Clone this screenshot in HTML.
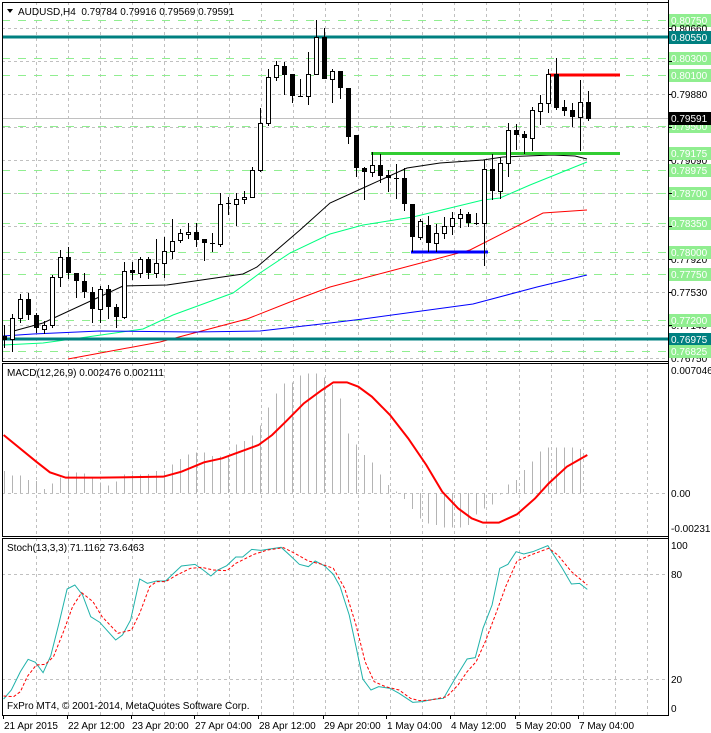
<!DOCTYPE html><html><head><meta charset="utf-8"><style>
html,body{margin:0;padding:0;background:#fff;width:711px;height:733px;overflow:hidden}
svg{display:block;font-family:"Liberation Sans",sans-serif;font-size:10px}
</style></head><body>
<svg id="s" width="711" height="733" xmlns="http://www.w3.org/2000/svg"></svg>
<script>
var S=document.getElementById('s'),h='';
function L(x1,y1,x2,y2,c,w,d){h+='<line x1="'+x1+'" y1="'+y1+'" x2="'+x2+'" y2="'+y2+'" stroke="'+c+'" stroke-width="'+(w||1)+'"'+(d?' stroke-dasharray="'+d+'"':'')+' shape-rendering="crispEdges"/>';}
function P(pts,c,w,d){h+='<polyline fill="none" points="'+pts.map(function(p){return p[0]+','+p[1]}).join(' ')+'" stroke="'+c+'" stroke-width="'+(w||1)+'"'+(d?' stroke-dasharray="'+d+'"':'')+'/>';}
function T(x,y,t,c,a){h+='<text x="'+x+'" y="'+y+'" fill="'+(c||'#000')+'"'+(a?' text-anchor="'+a+'"':'')+'>'+t+'</text>';}
function R(x,y,w,hh,f,s){h+='<rect x="'+x+'" y="'+y+'" width="'+w+'" height="'+hh+'" fill="'+f+'"'+(s?' stroke="'+s+'"':'')+' shape-rendering="crispEdges"/>';}
var vx=[];for(var i=0;i<20;i++)vx.push(Math.round(35.5+i*32.2));
var panes=[[2,361],[363,536],[538,715]];
// grids
panes.forEach(function(p){vx.forEach(function(x){L(x+.5,p[0],x+.5,p[1],'#c0c0c0',1,'3,3')})});
[28,61,94,127,160,193,226,259,292,325,358].forEach(function(y){L(2,y+.5,668,y+.5,'#c0c0c0',1,'3,3')});
L(2,493.5,668,493.5,'#c0c0c0',1,'3,3');
L(2,574.5,668,574.5,'#c0c0c0',1,'3,3');L(2,679.5,668,679.5,'#c0c0c0',1,'3,3');
// green dashed levels
[20,58,75,126,170,193,223,252,274,320,351].forEach(function(y){L(2,y+.5,668,y+.5,'#90ee90',1,'8,8')});
// bid line
L(2,118.5,668,118.5,'#c0c0c0',1);
// MAs
P([[3,345],[43,343],[87,337],[143,329],[173,315],[233,293],[260,273],[290,253],[330,234],[363,225],[413,217],[483,200],[500,198],[530,185],[587,162]],'#00ff7f',1);
P([[68,359],[160,342],[247,319],[290,302],[330,287],[383,273],[470,250],[543,213],[587,210]],'#ff0000',1);
P([[3,336],[33,334],[100,331],[193,332],[260,331],[330,323],[363,319],[473,304],[537,287],[587,275]],'#0000ff',1);
P([[10,332],[43,323],[123,286],[167,285],[243,274],[257,267],[300,230],[330,203],[363,188],[407,168],[440,163],[483,160],[503,157],[552,155],[575,156],[587,159]],'#000',1);
// thick lines
L(2,37,668,37,'#008080',3);L(2,339,668,339,'#008080',3);
L(549,75,620,75,'#ff0000',3);L(371,153.5,620,153.5,'#32cd32',3);L(411,252,488,252,'#0000ff',3);
// candles [open?, bodyTop, bodyBot, high, low, dark(1)/white(0)]
var C=[[336,340,325,348,1],[318,339,314,352,0],[299,318,294,323,0],[299,315,293,320,1],[315,328,313,333,1],[325,329,321,334,0],[277,325,275,328,0],[257,277,250,287,0],[257,273,247,279,1],[273,281,273,298,1],[281,292,273,298,1],[292,309,287,323,1],[289,309,286,323,0],[289,307,285,319,1],[307,317,304,328,1],[271,317,262,319,0],[270,273,262,280,1],[259,273,257,278,0],[259,273,257,279,1],[263,273,239,278,0],[251,263,237,278,0],[241,251,219,259,0],[233,240,229,243,0],[232,234,223,239,0],[232,240,223,247,1],[239,243,239,261,1],[243,243,233,252,2],[204,244,193,247,0],[203,203,197,215,2],[199,204,193,226,0],[197,199,191,204,0],[170,197,167,197,0],[123,170,108,172,0],[77,123,69,126,0],[65,77,61,81,0],[66,75,62,95,1],[74,96,74,103,1],[96,96,79,97,2],[74,96,52,105,0],[37,74,20,75,0],[37,79,28,79,1],[71,79,69,103,0],[71,88,71,99,1],[88,137,88,144,1],[135,168,135,177,1],[168,172,167,200,1],[165,172,152,177,0],[165,176,154,183,1],[175,178,170,192,1],[178,178,164,199,2],[178,204,168,211,1],[204,237,204,252,1],[221,237,219,240,0],[225,243,216,252,1],[233,243,224,252,0],[226,233,217,239,0],[218,226,212,235,0],[214,218,209,228,0],[214,223,212,227,1],[223,223,213,225,2],[169,223,160,266,0],[169,191,154,200,1],[163,191,158,199,0],[130,163,123,177,0],[130,135,124,150,1],[134,138,131,154,1],[110,138,107,151,0],[103,111,95,125,0],[74,103,69,113,0],[74,108,58,110,1],[107,111,100,116,1],[110,117,103,127,1],[102,117,80,151,0],[102,119,91,121,1]];
C.forEach(function(c,i){var x=4+8*i;L(x+.5,c[2],x+.5,c[3],'#000',1);
 if(c[4]==2){L(x-2,c[0]+.5,x+3,c[0]+.5,'#000',1)}
 else if(c[4]==1){R(x-2,c[0],5,Math.max(c[1]-c[0],2),'#000')}
 else{R(x-1.5,c[0]+.5,4,Math.max(c[1]-c[0],1),'#fff','#000')}});
// MACD histogram
var HB=[348,362,362,375,378,402,385,368,352,352,355,368,382,392,380,358,358,358,357,348,348,328,312,298,292,292,303,305,300,268,258,242,212,157,115,85,82,62,55,55,68,90,130,235,268,300,322,358,390,410,432,462,490,505,510,518,518,518,510,478,460,448,418,388,375,345,320,290,278,278,278,278,282];
HB.forEach(function(Y,i){var x=4+8*i;var y=355+Y/3;L(x+.5,493,x+.5,y,'#b4b4b4',1)});
var sg=[[8,240],[80,320],[110,352],[145,368],[220,368],[360,365],[400,350],[450,322],[490,310],[520,295],[570,270],[600,240],[630,200],[670,145],[710,105],[735,82],[765,82],[790,95],[820,125],[860,180],[900,250],[940,330],[975,410],[1010,460],[1040,490],[1065,503],[1100,503],[1140,478],[1180,430],[1210,385],[1250,335],[1295,300]];
P(sg.map(function(p){return[p[0]/2.205,355+p[1]/3]}),'#ff0000',2);
// Stoch
var st=[[8,492],[25,465],[45,410],[62,373],[78,382],[95,413],[112,362],[130,265],[148,162],[165,150],[182,180],[200,245],[220,262],[255,315],[270,300],[288,255],[308,132],[325,145],[345,138],[365,138],[400,93],[430,88],[448,105],[465,123],[480,105],[500,92],[520,66],[535,66],[555,43],[575,46],[595,42],[620,37],[640,62],[660,88],[680,95],[695,78],[715,92],[735,118],[750,155],[770,240],[785,335],[800,432],[818,465],[835,455],[860,460],[880,475],[910,502],[930,500],[955,493],[978,490],[995,450],[1015,405],[1030,372],[1048,368],[1065,280],[1085,210],[1102,100],[1120,88],[1138,50],[1155,57],[1175,50],[1208,32],[1240,100],[1260,147],[1278,145],[1295,163]];
var ss=[[8,483],[30,485],[45,470],[60,425],[80,390],[100,388],[118,365],[140,290],[160,215],[180,173],[205,200],[225,245],[260,295],[290,285],[308,235],[330,155],[345,140],[365,140],[390,120],[420,100],[445,97],[470,105],[500,107],[520,85],[560,58],[590,45],[625,38],[650,55],[680,78],[710,88],[735,100],[760,160],[785,270],[805,380],[825,440],[850,455],[880,465],[905,490],[925,497],[950,495],[985,485],[1010,450],[1030,410],[1050,380],[1070,320],[1095,230],[1115,155],[1140,78],[1170,60],[1210,40],[1230,60],[1260,110],[1295,150]];
P(st.map(function(p){return[p[0]/2.205,535+p[1]/3]}),'#20b2aa',1);
P(ss.map(function(p){return[p[0]/2.205,535+p[1]/3]}),'#ff0000',1,'3,2');
// frames
panes.forEach(function(p){R(2.5,p[0]+.5,666,p[1]-p[0],'none','#000')});
L(668.5,0,668.5,716,'#000',1);
// right labels
function lab(y,t,bg,fg){if(bg)R(669,y-6,42,13,bg);T(671,y+4,t,fg||'#000');}
lab(20,'0.80750','#90ee90','#fff');lab(28,'0.80660');lab(37,'0.80550','#008080','#fff');
lab(61,'0.80270');lab(58,'0.80300','#90ee90','#fff');lab(75,'0.80100','#90ee90','#fff');lab(94,'0.79880');
lab(126,'0.79500','#90ee90','#fff');lab(118,'0.79591','#000','#fff');
lab(160,'0.79090');lab(153,'0.79175','#90ee90','#fff');lab(170,'0.78975','#90ee90','#fff');lab(193,'0.78700','#90ee90','#fff');
lab(226,'0.78310');lab(223,'0.78350','#90ee90','#fff');lab(259,'0.77920');lab(252,'0.78000','#90ee90','#fff');
lab(274,'0.77750','#90ee90','#fff');lab(292,'0.77530');lab(325,'0.77140');lab(320,'0.77200','#90ee90','#fff');
lab(339,'0.76975','#008080','#fff');lab(358,'0.76750');lab(351,'0.76825','#90ee90','#fff');
T(671,374,'0.007046');T(671,497,'0.00');T(671,532,'-0.002317');
T(671,549,'100');T(671,578,'80');T(671,683,'20');T(671,712,'0');
[28,61,94,127,160,193,226,259,292,325].forEach(function(y){L(668,y+.5,672,y+.5,'#000')});
// titles
h+='<polygon points="7,9 13,9 10,13" fill="#000"/>';
T(18,15,'AUDUSD,H4&#160;&#160;0.79784 0.79916 0.79569 0.79591');
T(7,376,'MACD(12,26,9) 0.002476 0.002111');
T(7,551,'Stoch(13,3,3) 71.1162 73.6463');
T(7,709,'FxPro MT4, © 2001-2014, MetaQuotes Software Corp.');
// time axis
var tl=[[3,'21 Apr 2015'],[67,'22 Apr 12:00'],[131,'23 Apr 20:00'],[194,'27 Apr 04:00'],[258,'28 Apr 12:00'],[323,'29 Apr 20:00'],[386,'1 May 04:00'],[450,'4 May 12:00'],[515,'5 May 20:00'],[578,'7 May 04:00']];
tl.forEach(function(t){L(t[0]+.5,715,t[0]+.5,719,'#000');T(t[0]+1,729,t[1])});
S.innerHTML=h;
</script></body></html>
